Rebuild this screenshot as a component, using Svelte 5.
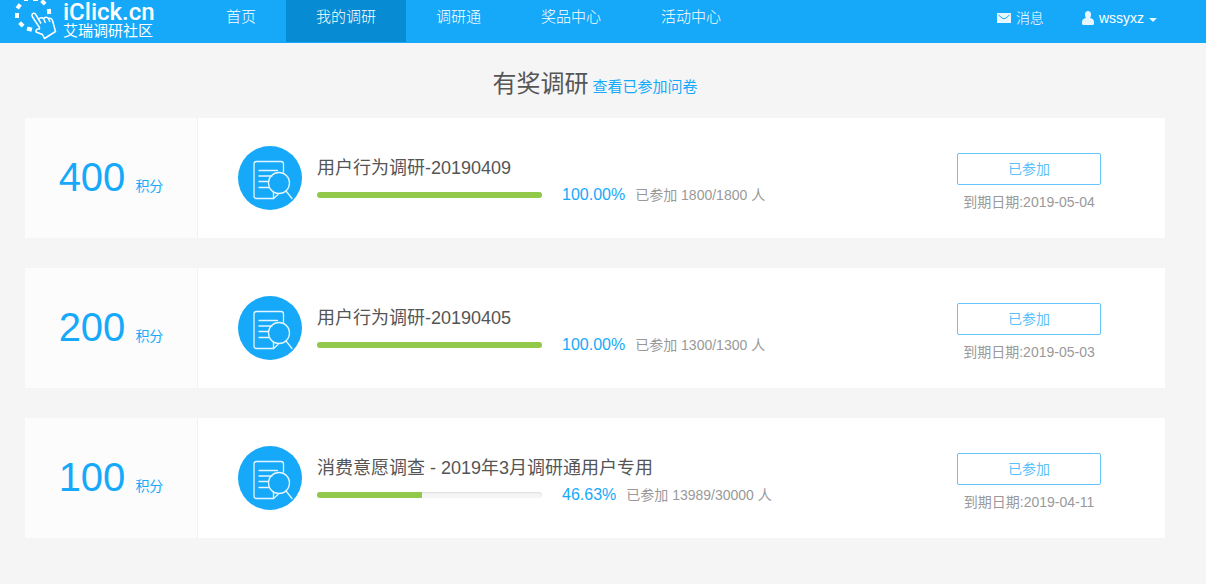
<script>
  let active = '我的调研';

  const navItems = ['首页', '我的调研', '调研通', '奖品中心', '活动中心'];

  const surveys = [
    { points: 400, title: '用户行为调研-20190409', percent: '100.00', joined: 1800, total: 1800, due: '2019-05-04' },
    { points: 200, title: '用户行为调研-20190405', percent: '100.00', joined: 1300, total: 1300, due: '2019-05-03' },
    { points: 100, title: '消费意愿调查 - 2019年3月调研通用户专用', percent: '46.63', joined: 13989, total: 30000, due: '2019-04-11' }
  ];
</script>

<header class="header">
  <a class="logo" href="#home">
    <svg class="logo-mark" width="46" height="40" viewBox="0 0 46 40" aria-hidden="true">
      <g fill="#fff">
        <rect x="10" y="-3" width="4" height="4" />
        <rect x="19" y="-3" width="5" height="4" />
        <rect x="3" y="4" width="4" height="5" transform="rotate(35 5 6)" />
        <rect x="27" y="0" width="5" height="4" transform="rotate(45 29 2)" />
        <rect x="1" y="13" width="4" height="5" />
        <rect x="33" y="9" width="4" height="5" transform="rotate(-5 35 11)" />
        <rect x="5" y="22" width="4" height="5" transform="rotate(-45 7 24)" />
        <rect x="13" y="27" width="5" height="4" transform="rotate(15 15 29)" />
      </g>
      <path
        d="M25.500 27.500 L18.500 17 Q17 14 19.500 13.300 Q21 13 22 15 L27 23.500 M24.500 19.500 Q27 16.500 29.500 18.500 L31.500 23 M29.500 18.500 Q32.500 16 34.500 18.500 L36 22 M34.500 18.500 Q37.500 17.500 38.500 20.500 L41.500 31.500 L30.500 38.500 L28.500 34.500 L22 32 Q21.500 28.500 25.500 29 V27.500"
        fill="none"
        stroke="#fff"
        stroke-width="1.500"
        stroke-linejoin="round"
      />
    </svg>
    <span class="logo-text">
      <strong>iClick.cn</strong>
      <small>艾瑞调研社区</small>
    </span>
  </a>

  <nav class="nav">
    {#each navItems as item}
      <a href="#nav" class:active={item === active} on:click={() => (active = item)}>{item}</a>
    {/each}
  </nav>

  <div class="user-menu">
    <a href="#messages">
      <svg width="14" height="10" viewBox="0 0 14 10" aria-hidden="true">
        <rect width="14" height="10" fill="#e8f6ff" />
        <path d="M1.500 2 L5 5 Q7 6.500 9 5 L12.500 2" fill="none" stroke="#16a9fa" />
      </svg>
      消息
    </a>
    <button type="button">
      <svg width="12" height="14" viewBox="0 0 12 14" aria-hidden="true">
        <path d="M6 0 C8 0 9 1.500 9 3.500 C9 5.500 8.500 6.500 8 7 C10.500 7.500 12 8.500 12 11 V12.500 Q12 14 10.500 14 H1.500 Q0 14 0 12.500 V11 C0 8.500 1.500 7.500 4 7 C3.500 6.500 3 5.500 3 3.500 C3 1.500 4 0 6 0 Z" fill="#e8f6ff" />
      </svg>
      wssyxz
      <span class="caret"></span>
    </button>
  </div>
</header>

<main class="container">
  <div class="page-title">
    <h1>有奖调研</h1>
    <a href="#joined">查看已参加问卷</a>
  </div>

  {#each surveys as survey}
    <section class="card">
      <div class="points">
        <p><strong>{survey.points}</strong> 积分</p>
      </div>

      <svg class="survey-icon" width="64" height="64" viewBox="0 0 64 64" aria-hidden="true">
        <circle cx="32" cy="32" r="32" fill="#16a9fa" />
        <g fill="none" stroke="#e3f5ff" stroke-width="1.300" stroke-linecap="round">
          <path d="M45.500 26 V18 Q45.500 15.500 43 15.500 H18.500 Q16 15.500 16 18 V50 Q16 52.500 18.500 52.500 H35.500 L40 48.500" />
          <path d="M35.500 52.500 V46.500" />
          <path d="M21 24.500 H39.500 M21 30 H34 M21 35.500 H30 M21 41.500 H31" />
          <circle cx="41" cy="37" r="10.500" />
          <path d="M48 45 L54 52.500" />
        </g>
      </svg>

      <div class="info">
        <h2>{survey.title}</h2>
        <div class="progress-row">
          <div class="progress">
            <div class="progress-bar" style="width: {survey.percent}%"></div>
          </div>
          <span class="percent">{survey.percent}%</span>
          <span class="count">已参加 {survey.joined}/{survey.total} 人</span>
        </div>
      </div>

      <div class="action">
        <button type="button">已参加</button>
        <p>到期日期:{survey.due}</p>
      </div>
    </section>
  {/each}
</main>

<style>
  :global(body) {
    background: #f5f5f5;
    color: #555;
    font-family: 'Liberation Sans', 'Noto Sans CJK SC', sans-serif;
    font-size: 14px;
  }

  a {
    color: #16a9fa;
    text-decoration: none;
  }

  button {
    font: inherit;
    cursor: pointer;
  }

  .header {
    display: flex;
    align-items: flex-start;
    height: 43px;
    padding-right: 49px;
    padding-left: 14px;
    background: #16a9fa;
  }

  .logo {
    display: flex;
    width: 182px;
    gap: 3px;
    color: #fff;
  }

  .logo-text {
    display: flex;
    flex-direction: column;
  }

  .logo-text strong {
    font-family: Roboto, sans-serif;
    font-size: 24px;
    font-weight: 500;
    line-height: 24px;
  }

  .logo-text small {
    font-size: 15px;
    line-height: 14px;
  }

  .nav {
    display: flex;
    flex: 1;
  }

  .nav a {
    height: 42px;
    padding: 0 30px;
    color: #fff;
    font-size: 15px;
    font-weight: 300;
    line-height: 34px;
  }

  .nav a.active {
    background: #078cd4;
  }

  .user-menu {
    display: flex;
    gap: 38px;
  }

  .user-menu a,
  .user-menu button {
    display: flex;
    align-items: center;
    gap: 5px;
    padding: 0;
    border: 0;
    background: none;
    color: #fff;
    font-weight: 300;
    line-height: 36px;
  }

  .caret {
    margin-top: 3px;
    border: 4px solid transparent;
    border-top-color: #e8f6ff;
    border-bottom: 0;
  }

  .container {
    padding: 0 41px 16px 25px;
  }

  .page-title {
    display: flex;
    align-items: baseline;
    justify-content: center;
    gap: 4px;
    height: 75px;
    line-height: 82px;
  }

  .page-title h1 {
    margin: 0;
    font-size: 24px;
    font-weight: 400;
  }

  .page-title a {
    font-size: 15px;
  }

  .card {
    display: flex;
    align-items: center;
    height: 120px;
    margin-bottom: 30px;
    background: #fff;
  }

  .points {
    display: flex;
    align-items: center;
    justify-content: center;
    align-self: stretch;
    width: 172px;
    border-right: 1px solid #f2f2f2;
    background: #fcfcfc;
    color: #16a9fa;
  }

  .points p {
    display: flex;
    align-items: baseline;
    gap: 10px;
    margin: 0 0 2px;
  }

  .points strong {
    font-size: 40px;
    font-weight: 400;
  }

  .survey-icon {
    margin: 0 15px 0 40px;
  }

  .info {
    flex: 1;
    padding-top: 4px;
  }

  .info h2 {
    margin: 0 0 4px;
    font-size: 18px;
    font-weight: 400;
    line-height: 26px;
  }

  .progress-row {
    display: flex;
    align-items: center;
    line-height: 20px;
  }

  .progress {
    width: 225px;
    height: 6px;
    margin-right: 20px;
    overflow: hidden;
    border-radius: 3px;
    background: #f5f5f5;
    box-shadow: inset 0 1px 2px rgba(0, 0, 0, 0.1);
  }

  .progress-bar {
    height: 100%;
    background: #92c94b;
  }

  .percent {
    margin-right: 10px;
    color: #16a9fa;
    font-size: 16px;
  }

  .count {
    color: #999;
  }

  .action {
    width: 144px;
    margin-right: 64px;
    padding-top: 8px;
    text-align: center;
  }

  .action button {
    width: 100%;
    height: 32px;
    padding: 0 0 2px;
    border: 1px solid #65c5fb;
    border-radius: 2px;
    background: #fff;
    color: #5bc1fb;
  }

  .action p {
    margin: 7px 0 0;
    color: #999;
    line-height: 20px;
  }
</style>
